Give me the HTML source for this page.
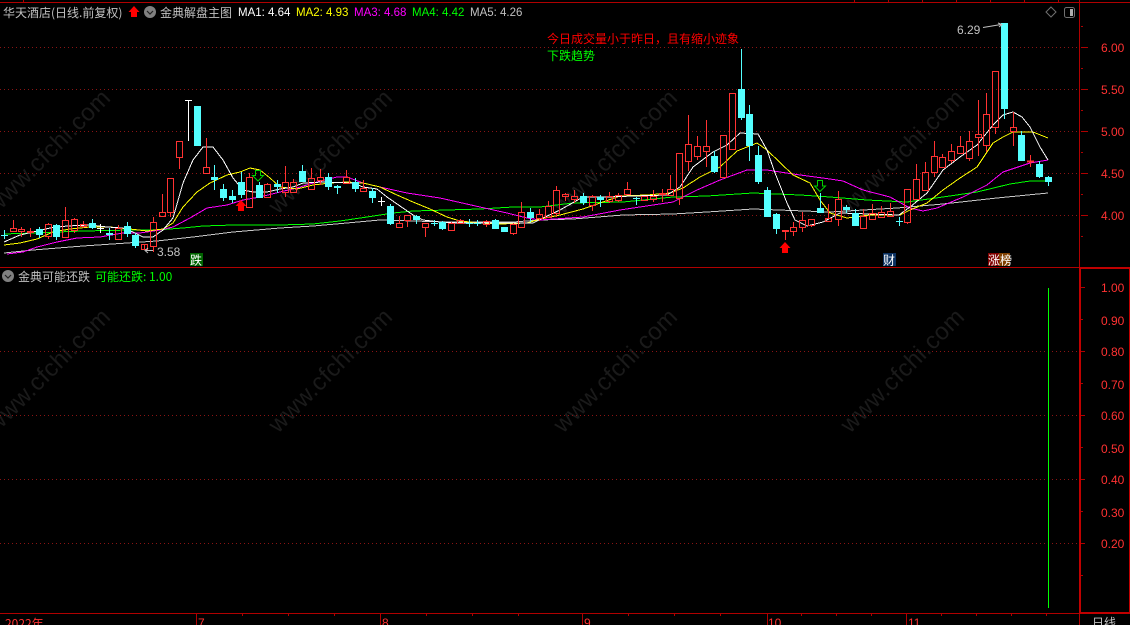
<!DOCTYPE html>
<html><head><meta charset="utf-8"><style>
html,body{margin:0;padding:0;background:#000;width:1130px;height:625px;overflow:hidden}
svg{display:block;position:absolute;left:0;top:0}
text{font-family:"Liberation Sans","WenQuanYi Zen Hei","Noto Sans CJK SC",sans-serif;font-size:12px}
.c{font-family:"WenQuanYi Zen Hei","Noto Sans CJK SC",sans-serif}
.wm{font-family:"Liberation Sans",sans-serif;font-size:24px;fill:#1a1a1a;letter-spacing:.4px}
.ax{fill:#ff3232}
.ma{font-size:11.5px}
</style></head><body>
<svg width="1130" height="625" viewBox="0 0 1130 625" xmlns="http://www.w3.org/2000/svg">
<rect width="1130" height="625" fill="#000"/>
<!-- watermarks -->
<g class="wm">
<text class="wm" transform="translate(-4 215) rotate(-45)">www.cfchi.com</text>
<text class="wm" transform="translate(278 215) rotate(-45)">www.cfchi.com</text>
<text class="wm" transform="translate(563 215) rotate(-45)">www.cfchi.com</text>
<text class="wm" transform="translate(850 215) rotate(-45)">www.cfchi.com</text>
<text class="wm" transform="translate(-4 434) rotate(-45)">www.cfchi.com</text>
<text class="wm" transform="translate(278 434) rotate(-45)">www.cfchi.com</text>
<text class="wm" transform="translate(563 434) rotate(-45)">www.cfchi.com</text>
<text class="wm" transform="translate(850 434) rotate(-45)">www.cfchi.com</text>
</g>
<!-- grid -->
<g stroke="#8a1414" stroke-width="1" stroke-dasharray="1 3" shape-rendering="crispEdges">
<path d="M0 47.5H1080M0 89.5H1080M0 131.5H1080M0 173.5H1080M0 215.5H1080M0 351.5H1080M0 415.5H1080M0 479.5H1080M0 543.5H1080"/>
</g>
<!-- frame -->
<g stroke="#b00000" fill="none" shape-rendering="crispEdges">
<path d="M0 2.5H1130M0 267.5H1080M0 613.5H1080M1079.5 0V267M1079.5 613V625"/>
<path d="M23.5 0V2M854.5 0V2M888.5 0V2M922.5 0V2M956.5 0V2M990.5 0V2M1024.5 0V2M1058.5 0V2"/>
<path d="M196.5 613V625M380.5 613V625M582.5 613V625M767.5 613V625M906.5 613V625M242.5 613V616M288.5 613V616M334.5 613V616M426.5 613V616M472.5 613V616M518.5 613V616M628.5 613V616M674.5 613V616M720.5 613V616M801.5 613V616M836.5 613V616M871.5 613V616M941.5 613V616M976.5 613V616M1011.5 613V616M1046.5 613V616"/>
<path d="M1081 47.5H1088M1081 89.5H1088M1081 131.5H1088M1081 173.5H1088M1081 215.5H1088M1081 68.5H1083M1081 110.5H1083M1081 152.5H1083M1081 194.5H1083M1081 236.5H1083M1081 26.5H1083"/>
<path d="M1081 287.5H1085M1081 351.5H1085M1081 415.5H1085M1081 479.5H1085M1081 543.5H1085M1081 319.5H1083M1081 383.5H1083M1081 447.5H1083M1081 511.5H1083M1081 575.5H1083"/>
</g>
<g fill="#c00000" shape-rendering="crispEdges">
<rect x="1080" y="267" width="50" height="2"/>
<rect x="1079" y="267" width="2" height="347"/>
<rect x="1080" y="612" width="50" height="2"/>
<rect x="1129" y="267" width="1" height="347"/>
</g>
<!-- MA lines -->
<g fill="none" stroke-width="1" stroke-linejoin="round" shape-rendering="crispEdges">
<polyline stroke="#c8c8c8" points="4,253 33,250 83,246 127,243 157,241 193,237 233,232 280,228 313,226 347,223 380,220 447,222 513,222 540,220 573,219 623,215 673,214 707,212 753,209 830,212 897,208 943,204 997,198 1048,193"/>
<polyline stroke="#00ff00" points="4,234 33,233 83,231 133,230 157,230 183,228 203,226 233,225 280,225 313,224 340,221 367,217 393,213 413,211 447,210 480,209 513,207 540,207 573,203 623,202 673,197 707,196 753,193 800,195 830,197 867,200 907,202 943,197 977,192 1010,184 1030,181 1048,181"/>
<polyline stroke="#ff00ff" points="7,254 23,252 37,247 57,242 77,238 100,237 123,233 140,233 160,230 173,227 190,218 207,208 227,205 243,200 260,197 280,192 297,188 313,183 337,177 347,177 363,183 380,187 407,193 440,198 480,207 507,213 527,218 540,220 583,217 620,210 673,202 697,190 720,180 747,170 767,170 793,174 830,179 843,181 863,190 890,197 910,208 923,211 937,208 963,197 987,185 1003,172 1030,163 1048,160"/>
<polyline stroke="#ffff00" points="4,245 20,243 37,239 53,232 70,229 90,227 110,227 130,229 147,231 163,229 173,223 183,207 197,192 210,183 227,175 240,172 250,168 260,170 270,178 280,187 297,189 313,185 330,183 347,182 363,183 380,187 397,195 413,202 430,209 447,217 460,221 480,223 500,224 527,223 540,219 560,215 583,209 600,203 620,196 647,195 670,193 683,188 700,177 720,167 737,151 757,143 767,150 793,175 810,183 820,200 830,213 847,218 870,215 900,215 910,210 927,203 943,190 960,178 977,167 993,143 1003,137 1013,132 1033,132 1048,138"/>
<polyline stroke="#ffffff" points="4,242 20,235 33,232 50,228 67,226 90,225 107,227 123,228 133,232 143,237 153,237 163,230 173,218 183,183 193,160 203,147 213,147 223,160 233,178 243,190 253,192 267,192 280,189 293,187 303,183 323,182 353,183 363,187 377,189 387,197 400,206 413,215 423,220 440,222 460,223 487,223 513,223 533,223 543,218 560,210 583,197 607,197 633,196 667,195 680,187 693,167 713,152 727,145 740,133 758,134 767,150 775,173 787,203 795,220 807,226 823,222 840,213 870,214 899,215 910,207 927,193 943,170 960,157 977,145 993,125 1003,115 1013,112 1022,117 1030,127 1040,147 1048,160"/>
</g>
<!-- red candles -->
<g fill="none" stroke="#ff3232" shape-rendering="crispEdges">
<path d="M13.5 220V228M21.5 227V229M21.5 231V237M30.5 228V231M30.5 232V237M48.5 223V224M48.5 236V239M65.5 207V220M65.5 237V238M74.5 218V219M74.5 230V233M83.5 221V224M83.5 226V228M153.5 217V222M153.5 246V252M162.5 194V212M162.5 216V217M170.5 212V217M179.5 157V169M206.5 138V167M249.5 173V177M267.5 183V184M285.5 166V182M285.5 192V197M293.5 179V182M311.5 168V178M320.5 169V177M320.5 180V185M346.5 170V177M363.5 180V188M399.5 216V223M407.5 220V227M425.5 227V237M451.5 222V223M460.5 219V220M460.5 223V224M486.5 220V221M486.5 224V227M513.5 223V224M513.5 233V235M521.5 202V212M539.5 209V214M539.5 218V221M548.5 201V206M548.5 217V218M556.5 186V190M556.5 213V217M565.5 193V194M565.5 196V201M574.5 190V196M574.5 199V203M592.5 195V196M592.5 205V211M609.5 192V196M609.5 201V203M618.5 193V195M618.5 200V202M627.5 182V189M653.5 190V196M653.5 199V202M662.5 189V193M662.5 194V202M670.5 175V189M679.5 198V205M688.5 115V144M688.5 161V171M697.5 136V146M697.5 156V160M706.5 120V146M706.5 151V167M785.5 230V240M793.5 222V227M793.5 231V236M802.5 212V220M802.5 227V232M811.5 225V227M828.5 204V218M828.5 221V222M838.5 191V199M838.5 219V226M863.5 209V216M872.5 204V213M881.5 206V212M890.5 203V211M907.5 222V224M916.5 164V179M925.5 162V172M934.5 141V156M934.5 172V177M942.5 154V157M951.5 144V151M951.5 160V163M960.5 136V146M969.5 131V141M969.5 158V161M978.5 100V134M978.5 137V156M986.5 93V114M986.5 145V152M995.5 127V134M1013.5 112V127M1013.5 131V146M1030.5 155V167M118.5 225V228M144.5 244V249"/>
<path d="M10.5 228.5h6v3h-6zM18.5 229.5h6v2h-6zM45.5 224.5h6v12h-6zM62.5 220.5h6v17h-6zM71.5 219.5h6v11h-6zM115.5 228.5h6v11h-6zM141.5 244.5h6v5h-6zM150.5 222.5h6v24h-6zM159.5 212.5h6v4h-6zM167.5 178.5h6v34h-6zM176.5 141.5h6v16h-6zM203.5 167.5h6v6h-6zM246.5 177.5h6v30h-6zM264.5 184.5h6v13h-6zM282.5 182.5h6v10h-6zM290.5 182.5h6v10h-6zM308.5 178.5h6v11h-6zM317.5 177.5h6v3h-6zM343.5 177.5h6v6h-6zM360.5 188.5h6v3h-6zM396.5 223.5h6v4h-6zM404.5 215.5h6v5h-6zM422.5 223.5h6v4h-6zM448.5 223.5h6v7h-6zM457.5 220.5h6v3h-6zM483.5 221.5h6v3h-6zM510.5 224.5h6v9h-6zM518.5 212.5h6v15h-6zM536.5 214.5h6v4h-6zM545.5 206.5h6v11h-6zM553.5 190.5h6v23h-6zM562.5 194.5h6v2h-6zM571.5 196.5h6v3h-6zM589.5 196.5h6v9h-6zM606.5 196.5h6v5h-6zM615.5 195.5h6v5h-6zM624.5 189.5h6v5h-6zM641.5 196.5h6v4h-6zM650.5 196.5h6v3h-6zM659.5 193.5h6v1h-6zM667.5 189.5h6v6h-6zM676.5 153.5h6v45h-6zM685.5 144.5h6v17h-6zM694.5 146.5h6v10h-6zM703.5 146.5h6v5h-6zM720.5 135.5h6v42h-6zM729.5 93.5h6v56h-6zM782.5 230.5h6v1h-6zM790.5 227.5h6v4h-6zM799.5 220.5h6v7h-6zM808.5 219.5h6v6h-6zM825.5 218.5h6v3h-6zM835.5 199.5h6v20h-6zM860.5 216.5h6v12h-6zM869.5 213.5h6v6h-6zM878.5 212.5h6v5h-6zM887.5 211.5h6v5h-6zM904.5 189.5h6v33h-6zM913.5 179.5h6v20h-6zM922.5 172.5h6v18h-6zM931.5 156.5h6v16h-6zM939.5 157.5h6v10h-6zM948.5 151.5h6v9h-6zM957.5 146.5h6v7h-6zM966.5 141.5h6v17h-6zM975.5 134.5h6v3h-6zM983.5 114.5h6v31h-6zM992.5 71.5h6v56h-6zM1010.5 127.5h6v4h-6zM27.5 231.5h6v1h-6zM80.5 224.5h6v2h-6z"/>
<path d="M1027 161.5h7" stroke-width="2"/>
</g>
<!-- cyan candles -->
<g fill="#54ffff" shape-rendering="crispEdges">
<path d="M36 229h7v6h-7zM53 225h7v12h-7zM89 223h7v5h-7zM106 233h7v2h-7zM124 226h7v8h-7zM132 235h7v11h-7zM194 106h7v40h-7zM211 177h7v3h-7zM220 189h7v9h-7zM229 196h7v4h-7zM238 182h7v13h-7zM256 185h7v13h-7zM274 184h7v3h-7zM299 171h7v11h-7zM325 177h7v10h-7zM334 186h7v2h-7zM352 182h7v7h-7zM369 191h7v7h-7zM387 206h7v18h-7zM413 216h7v4h-7zM439 222h7v7h-7zM492 220h7v9h-7zM501 227h7v5h-7zM527 212h7v6h-7zM580 196h7v7h-7zM711 156h7v16h-7zM738 89h7v29h-7zM746 114h7v32h-7zM755 155h7v27h-7zM764 190h7v27h-7zM773 214h7v15h-7zM817 208h7v5h-7zM843 207h7v3h-7zM852 213h7v13h-7zM1001 23h7v86h-7zM1018 135h7v26h-7zM1036 164h7v13h-7zM1045 177h7v5h-7zM597 197h7v3h-7z"/>
</g>
<g fill="none" stroke="#54ffff" shape-rendering="crispEdges">
<path d="M39.5 227V238M56.5 224V240M92.5 219V229M109.5 228V240M127.5 222V237M135.5 233V248M214.5 165V190M223.5 184V201M232.5 190V203M241.5 172V198M259.5 182V198M277.5 180V193M302.5 165V182M328.5 173V190M337.5 185V194M355.5 178V192M372.5 188V203M390.5 204V225M416.5 215V224M442.5 221V230M495.5 219V229M530.5 208V222M583.5 193V205M714.5 151V173M741.5 49V120M749.5 105V161M758.5 146V184M767.5 187V217M776.5 213V234M820.5 193V213M846.5 205V213M855.5 209V226M1004.5 23V119M1021.5 131V161M1039.5 161V178M1048.5 176V186"/>
<path d="M4.5 230V239M1 235.5H8M434.5 220V226M431 223.5H438M469.5 219V227M466 223.5H473M477.5 220V226M474 223.5H481M600.5 195V207M636.5 197V205M633 198.5H640M899.5 217V226M896 221.5H903"/>
</g>
<g fill="none" stroke="#fff" shape-rendering="crispEdges">
<path d="M100.5 224V233M97 228.5H104M188.5 100V141M185 100.5H192M381.5 197V206M378 201.5H385"/>
</g>
<!-- arrows -->
<path fill="#ff0000" d="M134 6L139.500 12H137V17H131V12H128.500Z"/>
<path fill="#ff0000" d="M241 200L246.500 206H244V211H238V206H235.500Z"/>
<path fill="#ff0000" d="M785 242L790.500 248H788V253H782V248H779.500Z"/>
<path fill="none" stroke="#00d000" d="M255.500 170.500H260.500V175.500H263.500L258 181L252.500 175.500H255.500Z"/>
<path fill="none" stroke="#00d000" d="M817.500 180.500H822.500V186H825.500L820 191.500L814.500 186H817.500Z"/>
<!-- price labels -->
<path fill="none" stroke="#c0c0c0" d="M153 250.500H146M148 248L145 250.500L148 253"/>
<text x="157" y="256" fill="#c0c0c0">3.58</text>
<path fill="none" stroke="#c0c0c0" d="M983 27.500L1001 24.500M998 23L1002 24.500L999 27"/>
<text x="957" y="34" fill="#c0c0c0">6.29</text>
<!-- tags -->
<rect x="190" y="253" width="13" height="13" fill="#006400"/>
<text class="c" x="190" y="264.500" fill="#fff">跌</text>
<rect x="883" y="253" width="13" height="13" fill="#0a3060"/>
<text class="c" x="883" y="264.500" fill="#fff">财</text>
<rect x="988" y="253" width="11" height="13" fill="#800000"/>
<rect x="999" y="253" width="11" height="13" fill="#804000"/>
<text class="c" x="988" y="264.500" fill="#fff">涨榜</text>
<!-- header -->
<text class="c" x="3" y="17" fill="#c0c0c0">华天酒店(日线.前复权)</text>
<circle cx="150" cy="12" r="6" fill="#808080"/>
<path d="M147 11l3 3 3-3" fill="none" stroke="#222" stroke-width="1.200"/>
<text class="c" x="160" y="17" fill="#c0c0c0">金典解盘主图</text>
<text class="ma" x="238" y="16" fill="#ffffff">MA1: 4.64</text>
<text class="ma" x="296" y="16" fill="#ffff00">MA2: 4.93</text>
<text class="ma" x="354" y="16" fill="#ff00ff">MA3: 4.68</text>
<text class="ma" x="412" y="16" fill="#00ff00">MA4: 4.42</text>
<text class="ma" x="470" y="16" fill="#c0c0c0">MA5: 4.26</text>
<path d="M1051 7l5 5-5 5-5-5z" fill="none" stroke="#707070"/>
<rect x="1064.500" y="7.500" width="10" height="10" rx="2" fill="none" stroke="#707070"/>
<rect x="1070" y="9" width="3" height="7" fill="#b0b0b0"/>
<text class="c" x="547" y="43" fill="#ff0000">今日成交量小于昨日，且有缩小迹象</text>
<text class="c" x="547" y="60" fill="#00ff00">下跌趋势</text>
<!-- lower panel -->
<circle cx="8" cy="276" r="6" fill="#808080"/>
<path d="M5 275l3 3 3-3" fill="none" stroke="#222" stroke-width="1.200"/>
<text class="c" x="18" y="281" fill="#c0c0c0">金典可能还跌</text>
<text class="c" x="95" y="281" fill="#00ff00">可能还跌: 1.00</text>
<rect x="1048" y="288" width="1" height="320" fill="#00ff00"/>
<!-- axis labels -->
<g class="ax">
<text class="ax" x="1101" y="52">6.00</text>
<text class="ax" x="1101" y="94">5.50</text>
<text class="ax" x="1101" y="136">5.00</text>
<text class="ax" x="1101" y="178">4.50</text>
<text class="ax" x="1101" y="220">4.00</text>
<text class="ax" x="1101" y="292">1.00</text>
<text class="ax" x="1101" y="325">0.90</text>
<text class="ax" x="1101" y="356">0.80</text>
<text class="ax" x="1101" y="389">0.70</text>
<text class="ax" x="1101" y="420">0.60</text>
<text class="ax" x="1101" y="453">0.50</text>
<text class="ax" x="1101" y="484">0.40</text>
<text class="ax" x="1101" y="517">0.30</text>
<text class="ax" x="1101" y="548">0.20</text>
<text class="ax c" x="5" y="628">2022年</text>
<text class="ax" x="198" y="627">7</text>
<text class="ax" x="382" y="627">8</text>
<text class="ax" x="584" y="627">9</text>
<text class="ax" x="768" y="627">10</text>
<text class="ax" x="908" y="627">11</text>
</g>
<text class="c" x="1092" y="627" fill="#c0c0c0">日线</text>
</svg>
</body></html>
